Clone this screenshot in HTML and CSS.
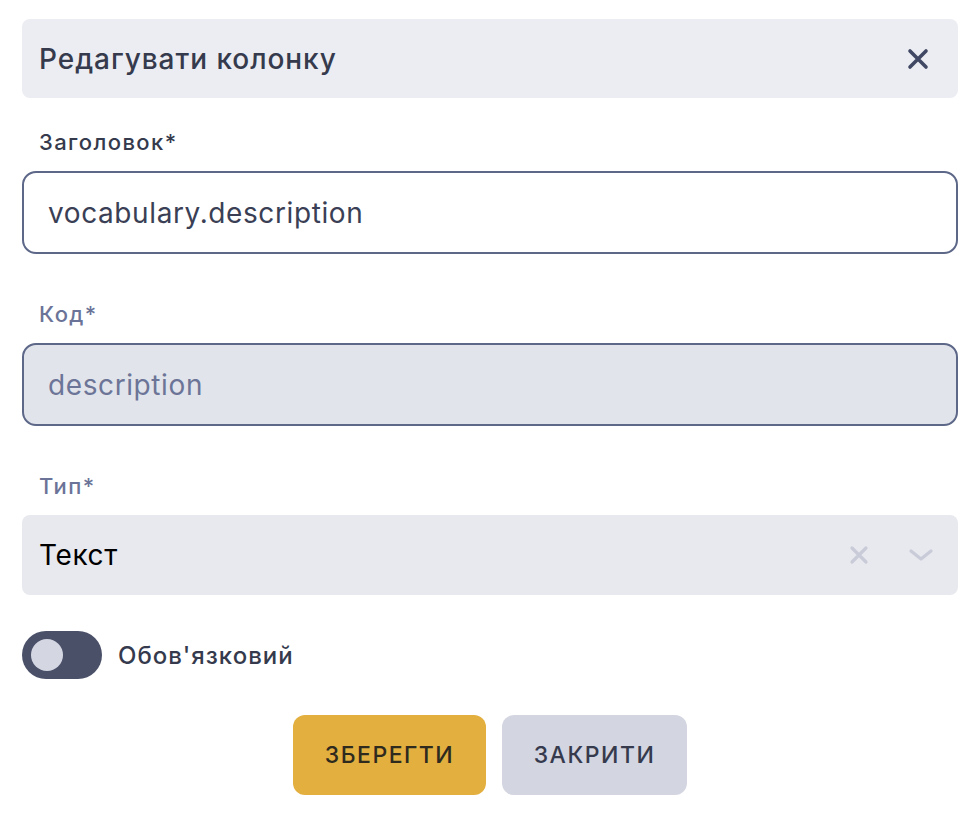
FILE: index.html
```html
<!DOCTYPE html>
<html lang="uk">
<head>
<meta charset="utf-8">
<link rel="stylesheet" href="styles.css">
</head>
<body>
<div class="dialog">
  <div class="header">
    <span class="title">Редагувати колонку</span>
    <svg class="close" width="22" height="22" viewBox="0 0 22 22"><path d="M3 3L19 19M19 3L3 19" stroke="#414863" stroke-width="3.6" stroke-linecap="round"/></svg>
  </div>
  <div class="field">
    <label class="label">Заголовок*</label>
    <div class="input">vocabulary.description</div>
  </div>
  <div class="field">
    <label class="label muted">Код*</label>
    <div class="input disabled">description</div>
  </div>
  <div class="field">
    <label class="label muted">Тип*</label>
    <div class="select">
      <span class="select-value">Текст</span>
      <svg class="sel-icon" width="22" height="22" viewBox="0 0 22 22"><path d="M4 4L18 18M18 4L4 18" stroke="#c9ccd8" stroke-width="3.2" stroke-linecap="round"/></svg>
      <svg class="sel-icon chev" width="26" height="22" viewBox="0 0 26 22"><path d="M3 7L13 15L23 7" fill="none" stroke="#c9ccd8" stroke-width="3.2" stroke-linecap="round" stroke-linejoin="round"/></svg>
    </div>
  </div>
  <div class="toggle-row">
    <span class="toggle"><span class="knob"></span></span>
    <span class="toggle-label">Обов'язковий</span>
  </div>
  <div class="actions">
    <button class="btn save">ЗБЕРЕГТИ</button>
    <button class="btn close-btn">ЗАКРИТИ</button>
  </div>
</div>
</body>
</html>
```
FILE: styles.css
```css
* { box-sizing: border-box; }
body {
  margin: 0;
  background: #ffffff;
  font-family: "Inter", "DejaVu Sans", sans-serif;
  color: #353a4d;
}
.dialog {
  padding: 19px 22px 0 22px;
  display: flex;
  flex-direction: column;
}
.header {
  height: 79px;
  background: #ecedf2;
  border-radius: 8px;
  display: flex;
  align-items: center;
  justify-content: space-between;
  padding: 0 29px 0 17px;
}
.title {
  font-size: 28px;
  font-weight: 500;
  letter-spacing: 0.95px;
  color: #353a4d;
}
.field {
  display: flex;
  flex-direction: column;
}
.label {
  font-size: 22px;
  font-weight: 500;
  letter-spacing: 1.4px;
  color: #353a4d;
  padding-left: 17px;
  height: 24px;
  line-height: 24px;
  margin-top: 32px;
  margin-bottom: 17px;
}
.label.muted { color: #6b7498; }
.field + .field .label { margin-top: 48px; }
.input {
  height: 83px;
  border: 2px solid #5d6788;
  border-radius: 14px;
  display: flex;
  align-items: center;
  padding-left: 24px;
  font-size: 28px;
  letter-spacing: 0.6px;
  color: #3a3f55;
  background: #ffffff;
}
.input.disabled {
  background: #e2e4eb;
  color: #6c7597;
}
.select {
  height: 80px;
  background: #e8e9ee;
  border-radius: 8px;
  display: flex;
  align-items: center;
  padding: 0 24px 0 17px;
}
.select-value {
  flex: 1;
  font-size: 28px;
  letter-spacing: 0.6px;
  color: #000000;
}
.sel-icon { flex: none; }
.chev { margin-left: 38px; }
.toggle-row {
  display: flex;
  align-items: center;
  margin-top: 36px;
  gap: 16px;
}
.toggle {
  width: 80px;
  height: 48px;
  border-radius: 24px;
  background: #4a5068;
  display: flex;
  align-items: center;
  padding-left: 9px;
}
.knob {
  width: 32px;
  height: 32px;
  border-radius: 50%;
  background: #d4d6e2;
}
.toggle-label {
  font-size: 24px;
  font-weight: 500;
  letter-spacing: 1px;
  color: #353a4d;
}
.actions {
  display: flex;
  justify-content: center;
  gap: 16px;
  margin-top: 36px;
}
.btn {
  height: 80px;
  border: none;
  border-radius: 12px;
  font-family: inherit;
  font-size: 23px;
  font-weight: 500;
  letter-spacing: 1.5px;
  padding: 0;
}
.save { background: #e3b040; color: #2f2a1e; width: 193px; }
.close-btn { background: #d3d5e1; color: #353a4d; width: 185px; }
```
